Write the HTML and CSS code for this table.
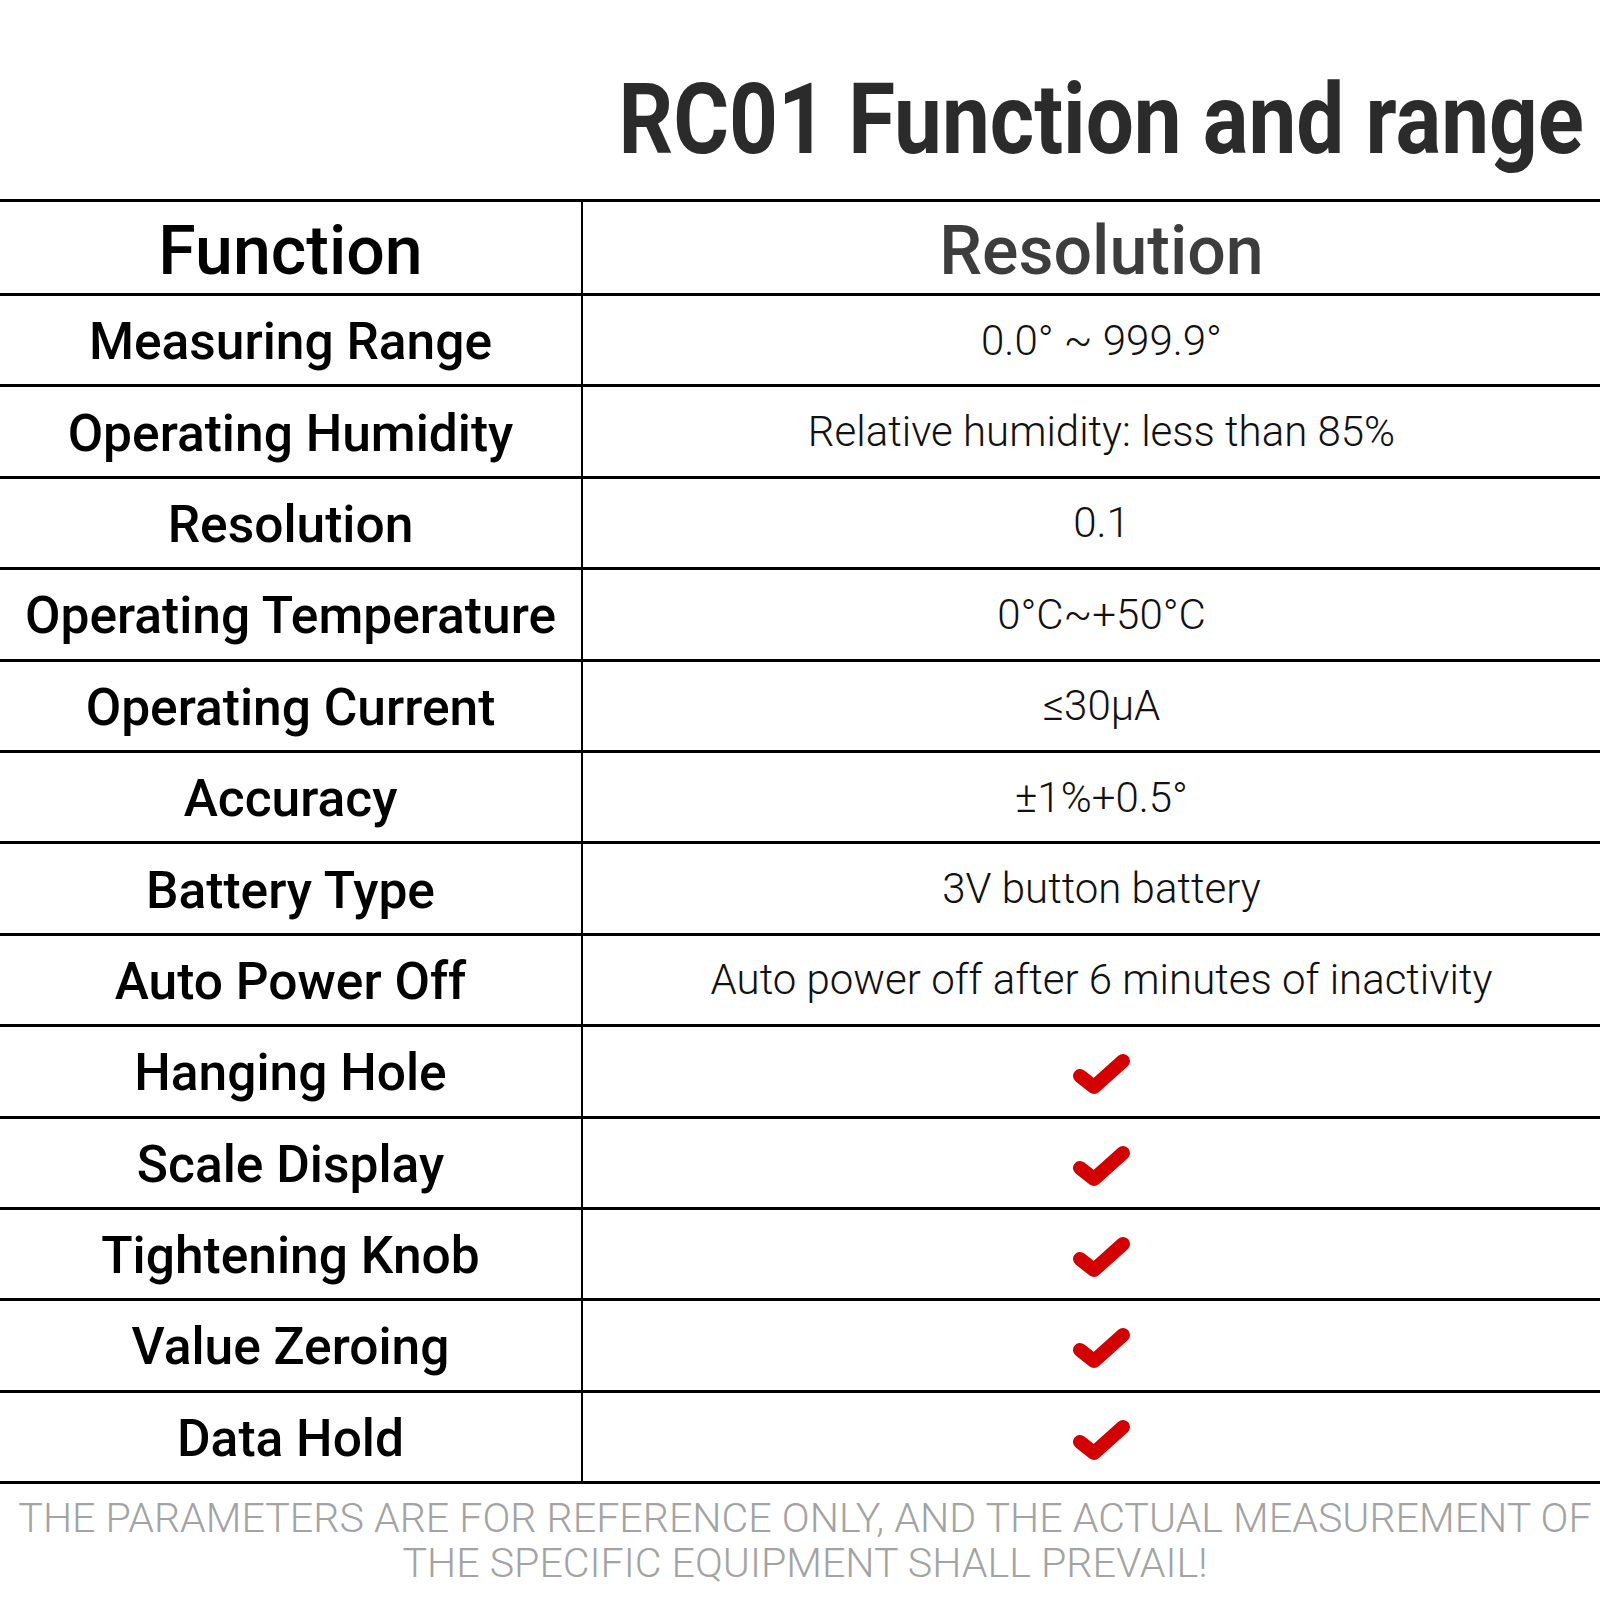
FILE: index.html
```html
<!DOCTYPE html>
<html>
<head>
<meta charset="utf-8">
<link rel="stylesheet" href="styles.css">
</head>
<body>
<div class="page">
  <div class="title-wrap"><h1 class="title">RC01 Function and range</h1></div>
  <div class="table">
    <div class="row head">
      <div class="cell left">Function</div>
      <div class="cell right">Resolution</div>
    </div>
    <div class="row"><div class="cell left">Measuring Range</div><div class="cell right">0.0° ~ 999.9°</div></div>
    <div class="row"><div class="cell left">Operating Humidity</div><div class="cell right">Relative humidity: less than 85%</div></div>
    <div class="row"><div class="cell left">Resolution</div><div class="cell right">0.1</div></div>
    <div class="row"><div class="cell left">Operating Temperature</div><div class="cell right">0°C~+50°C</div></div>
    <div class="row"><div class="cell left">Operating Current</div><div class="cell right">≤30μA</div></div>
    <div class="row"><div class="cell left">Accuracy</div><div class="cell right">±1%+0.5°</div></div>
    <div class="row"><div class="cell left">Battery Type</div><div class="cell right">3V button battery</div></div>
    <div class="row"><div class="cell left">Auto Power Off</div><div class="cell right">Auto power off after 6 minutes of inactivity</div></div>
    <div class="row"><div class="cell left">Hanging Hole</div><div class="cell right"><svg class="check" viewBox="0 0 60 50"><path d="M9 30 L23 41 L52 15"/></svg></div></div>
    <div class="row"><div class="cell left">Scale Display</div><div class="cell right"><svg class="check" viewBox="0 0 60 50"><path d="M9 30 L23 41 L52 15"/></svg></div></div>
    <div class="row"><div class="cell left">Tightening Knob</div><div class="cell right"><svg class="check" viewBox="0 0 60 50"><path d="M9 30 L23 41 L52 15"/></svg></div></div>
    <div class="row"><div class="cell left">Value Zeroing</div><div class="cell right"><svg class="check" viewBox="0 0 60 50"><path d="M9 30 L23 41 L52 15"/></svg></div></div>
    <div class="row"><div class="cell left">Data Hold</div><div class="cell right"><svg class="check" viewBox="0 0 60 50"><path d="M9 30 L23 41 L52 15"/></svg></div></div>
  </div>
  <p class="note">THE PARAMETERS ARE FOR REFERENCE ONLY, AND THE ACTUAL MEASUREMENT OF<br>THE SPECIFIC EQUIPMENT SHALL PREVAIL!</p>
</div>
</body>
</html>
```
FILE: styles.css
```css
html, body {
  margin: 0;
  padding: 0;
  background: #fff;
}
body {
  font-family: Roboto, "Noto Sans", "Liberation Sans", sans-serif;
  width: 1600px;
}
.page {
  width: 1600px;
  height: 1600px;
  overflow: hidden;
}
.title-wrap {
  padding-top: 70px;
  padding-right: 16px;
  text-align: right;
  height: 99px;
}
.title {
  display: inline-block;
  margin: 0;
  font-size: 99px;
  line-height: 99px;
  font-weight: 700;
  color: #2b2b2b;
  transform: scaleX(0.862);
  transform-origin: right center;
  white-space: nowrap;
}
.table {
  margin-top: 30px;
  border-top: 3px solid #000;
}
.row {
  display: grid;
  grid-template-columns: 583px 1fr;
  height: 88.4px;
  border-bottom: 3px solid #000;
}
.row.head {
  height: 91px;
}
.cell {
  display: flex;
  align-items: center;
  justify-content: center;
  white-space: nowrap;
}
.left {
  border-right: 2px solid #000;
  font-size: 51.5px;
  font-weight: 500;
  color: #000;
  padding-top: 3px;
}
.right {
  padding-left: 20px;
  font-size: 42px;
  font-weight: 300;
  color: #111;
}
.head .cell {
  font-size: 68px;
  font-weight: 500;
  padding-top: 6px;
}
.head .right {
  color: #3d3d3d;
}
.check {
  width: 60px;
  height: 50px;
  margin-left: -2px;
}
.check path {
  fill: none;
  stroke: #d40000;
  stroke-width: 14;
  stroke-linecap: round;
  stroke-linejoin: round;
}
.note {
  margin: 12px 0 0;
  padding-left: 10px;
  text-align: center;
  font-size: 41.2px;
  line-height: 45px;
  font-weight: 300;
  color: #a3a3a3;
  white-space: nowrap;
}
```
